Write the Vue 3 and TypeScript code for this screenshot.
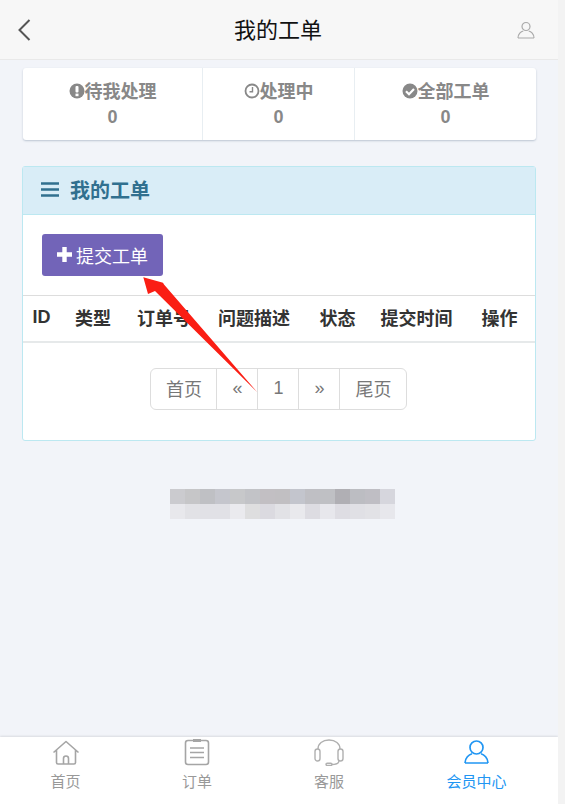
<script setup lang="ts">
const stats = [
  { key: 'wait', label: '待我处理', value: 0 },
  { key: 'doing', label: '处理中', value: 0 },
  { key: 'all', label: '全部工单', value: 0 },
]
const cols = ['ID', '类型', '订单号', '问题描述', '状态', '提交时间', '操作']
const pages = ['首页', '«', '1', '»', '尾页']
const blur = [
  ['#cbcbcf', '#c6c6c8', '#bfc0c4', '#c5c6cd', '#c7c8ca', '#c2c3c7', '#c2bfc3', '#c1bfc2', '#c3c5cd', '#bfbfc4', '#bfc0c4', '#b0afb4', '#bcbdc2', '#bfbec4', '#d6d6dd'],
  ['#e8e8ec', '#e2e2e6', '#e1e1e6', '#e1e1e6', '#eaeaee', '#dededf', '#dbdae0', '#e2e2e6', '#e9e9ed', '#dddce2', '#e7e7ec', '#dedde3', '#e0e0e5', '#e2e2e6', '#e7e7ec'],
]
</script>

<template>
  <div class="page">
    <header class="nav">
      <svg class="back" viewBox="0 0 14 24" width="14" height="24"><path d="M12.5 2 2.500 12l10 10" fill="none" stroke="#555" stroke-width="2" /></svg>
      <h1 class="nav-title">我的工单</h1>
      <svg class="nav-user" viewBox="0 0 18 18" width="18" height="18"><circle cx="9" cy="5.500" r="4" fill="none" stroke="#aaa" stroke-width="1.2" /><path d="M1 17c0-4 3-6.500 5.300-7M17 17c0-4-3-6.500-5.300-7M1 17h16" fill="none" stroke="#aaa" stroke-width="1.2" /></svg>
    </header>

    <section class="stats">
      <div v-for="s in stats" :key="s.key" class="stat" :class="'stat-' + s.key">
        <div class="stat-label">
          <svg class="stat-icon" viewBox="0 0 16 16" width="16" height="16">
            <template v-if="s.key === 'wait'">
              <circle cx="8" cy="8" r="7.500" fill="#888" />
              <rect x="6.500" y="3" width="3" height="6.400" rx="1" fill="#fff" />
              <rect x="6.500" y="10.600" width="3" height="2.600" fill="#fff" />
            </template>
            <template v-else-if="s.key === 'doing'">
              <circle cx="8" cy="8" r="6.500" fill="none" stroke="#888" stroke-width="1.800" />
              <path d="M8.500 4v4.700H5.500" fill="none" stroke="#888" stroke-width="1.400" />
            </template>
            <template v-else>
              <circle cx="8" cy="8" r="7.500" fill="#888" />
              <path d="m4 8.200 3 3 5-5.200" fill="none" stroke="#fff" stroke-width="2.200" />
            </template>
          </svg>{{ s.label }}
        </div>
        <div class="stat-value">{{ s.value }}</div>
      </div>
    </section>

    <section class="panel">
      <div class="panel-head">
        <svg class="menu" viewBox="0 0 18 15" width="18" height="15"><path d="M0 1.500h18M0 7.500h18M0 13.500h18" stroke="#31708f" stroke-width="2.600" /></svg>
        <span>我的工单</span>
      </div>
      <div class="panel-tools">
        <button class="submit" type="button">
          <svg viewBox="0 0 15 15" width="15" height="15"><path d="M7.500 0v15M0 7.500h15" stroke="#fff" stroke-width="4.400" /></svg>
          提交工单
        </button>
      </div>
      <div class="thead">
        <div v-for="c in cols" :key="c" class="th">{{ c }}</div>
      </div>
      <div class="pager-row">
        <div class="pager">
          <span v-for="p in pages" :key="p" class="pg">{{ p }}</span>
        </div>
      </div>
    </section>

    <div class="mosaic">
      <i v-for="(color, i) in blur.flat()" :key="i" :style="{ background: color }"></i>
    </div>

    <nav class="tabbar">
      <div class="tab">
        <div class="tab-icon">
          <svg viewBox="0 0 28 25" width="28" height="25" fill="none" stroke="#a5a5a5" stroke-width="1.600" stroke-linejoin="round"><path d="M1.500 12.500 14 1.500l12.500 11M4.500 10v12.500A1.500 1.500 0 0 0 6 24h16a1.500 1.500 0 0 0 1.500-1.500V10M11.500 24v-5.500a2.500 2.500 0 0 1 5 0V24" /></svg>
        </div>
        <span>首页</span>
      </div>
      <div class="tab">
        <div class="tab-icon">
          <svg viewBox="0 0 26 27" width="26" height="27" fill="none" stroke="#a5a5a5" stroke-width="1.600"><rect x="1.500" y="1.500" width="23" height="24" rx="2.500" /><path d="M6 9h14M6 13.500h14M6 18.500h14" /><path d="M9 1.500h8" stroke-width="3" /></svg>
        </div>
        <span>订单</span>
      </div>
      <div class="tab">
        <div class="tab-icon">
          <svg viewBox="0 0 30 27" width="30" height="27" fill="none" stroke="#b0b0b0" stroke-width="1.400"><path d="M4 10C4 4.500 8.500 1 15 1s11 3.500 11 9" /><rect x="1" y="10" width="5" height="12" rx="2.500" /><rect x="24" y="10" width="5" height="12" rx="2.500" /><path d="M25 22c-.5 3-3 3.500-7 3.500" /><rect x="12" y="24.200" width="6" height="2.300" rx="1.150" /></svg>
        </div>
        <span>客服</span>
      </div>
      <div class="tab tab-on">
        <div class="tab-icon">
          <svg viewBox="0 0 25 24" width="25" height="24" fill="none" stroke="#2196f3" stroke-width="1.700"><circle cx="12.500" cy="7.500" r="6.500" /><path d="M1 23c0-5 4-8.500 7-9.300M24 23c0-5-4-8.500-7-9.300M1 23h23" /></svg>
        </div>
        <span>会员中心</span>
      </div>
    </nav>

    <svg class="arrow" viewBox="0 0 125 125" width="125" height="125"><path d="M3.300 3.300 23 8.700 24 10.500 117.300 118.300 15 17 8 20Z" fill="#fa1e14" /></svg>
  </div>
</template>

<style>
html, body { margin: 0; background: #f3f3f3; }
</style>

<style scoped>
.page {
  position: relative;
  width: 558px;
  height: 804px;
  overflow: hidden;
  background: #f2f4f9;
  font-family: "Liberation Sans", "Noto Sans CJK SC", sans-serif;
  display: flex;
  flex-direction: column;
}
.nav {
  height: 60px;
  flex: none;
  box-sizing: border-box;
  padding: 0 23px 0 17px;
  display: flex;
  align-items: center;
  background: #f7f7f7;
  border-bottom: 1px solid #e9e9e9;
}
.nav-title { flex: 1; margin: 0; padding: 0 0 3px 8px; text-align: center; font-size: 22px; font-weight: 400; color: #111; }
.stats {
  margin: 8px 22px 0 23px;
  height: 72px;
  flex: none;
  display: grid;
  grid-template-columns: 179px 152px 1fr;
  background: #fff;
  border-radius: 3px;
  box-shadow: 0 1px 2px rgba(60, 90, 120, .3);
}
.stat { padding-top: 13px; text-align: center; color: #888; border-left: 1px solid #e8eef2; }
.stat:first-child { border-left: 0; }
.stat-label { font-size: 18px; font-weight: 700; line-height: 23px; display: flex; justify-content: center; align-items: center; }
.stat-icon { margin-top: -3px; }
.stat-value { font-size: 18px; font-weight: 700; line-height: 26px; }
.panel {
  margin: 26px 22px 0;
  height: 275px;
  flex: none;
  box-sizing: border-box;
  background: #fff;
  border: 1px solid #bce8f1;
  border-radius: 3px;
}
.panel-head {
  height: 48px;
  box-sizing: border-box;
  padding: 0 0 2px 18px;
  display: flex;
  align-items: center;
  gap: 11px;
  background: #d9edf7;
  border-bottom: 1px solid #bce8f1;
  color: #31708f;
  font-size: 20px;
  font-weight: 700;
}
.panel-tools { height: 80px; box-sizing: border-box; padding: 19px 0 0 19px; }
.submit {
  width: 121px;
  height: 42px;
  padding: 0 0 1px;
  border: 0;
  border-radius: 3px;
  background: #7264b8;
  color: #fff;
  font: inherit;
  font-size: 18px;
  display: flex;
  align-items: center;
  justify-content: center;
  gap: 4px;
}
.thead {
  height: 48px;
  box-sizing: border-box;
  padding-bottom: 3px;
  display: grid;
  grid-template-columns: 37px 66px 76px 104px 63px 95px 71px;
  align-items: center;
  border-top: 1px solid #ddd;
  border-bottom: 2px solid #e6e9ea;
  font-size: 18px;
  font-weight: 700;
  color: #333;
  text-align: center;
}
.pager-row { display: flex; justify-content: center; padding: 25px 1px 0 0; }
.pager {
  display: flex;
  height: 42px;
  box-sizing: border-box;
  border: 1px solid #ddd;
  border-radius: 6px;
  color: #777;
  font-size: 18px;
}
.pg {
  width: 41px;
  box-sizing: border-box;
  padding: 0 0 2px 1px;
  display: flex;
  align-items: center;
  justify-content: center;
  border-left: 1px solid #ddd;
}
.pg:first-child { width: 65px; border-left: 0; }
.pg:last-child { width: 67px; }
.mosaic {
  margin: 48px 0 0 170px;
  width: 225px;
  display: grid;
  grid-template-columns: repeat(15, 15px);
  grid-auto-rows: 15px;
}
.tabbar {
  margin-top: auto;
  height: 67px;
  flex: none;
  background: #fff;
  box-shadow: 0 -1px 2px rgba(0, 0, 0, .1);
  display: grid;
  grid-template-columns: 131px 132px 132px 1fr;
  color: #999;
  font-size: 15px;
}
.tab { display: flex; flex-direction: column; align-items: center; }
.tab-icon { height: 30px; display: flex; align-items: center; justify-content: center; }
.tab span { margin-top: 5px; line-height: 20px; }
.tab-on { color: #2196f3; }
.arrow { position: absolute; left: 140px; top: 274px; }
</style>
